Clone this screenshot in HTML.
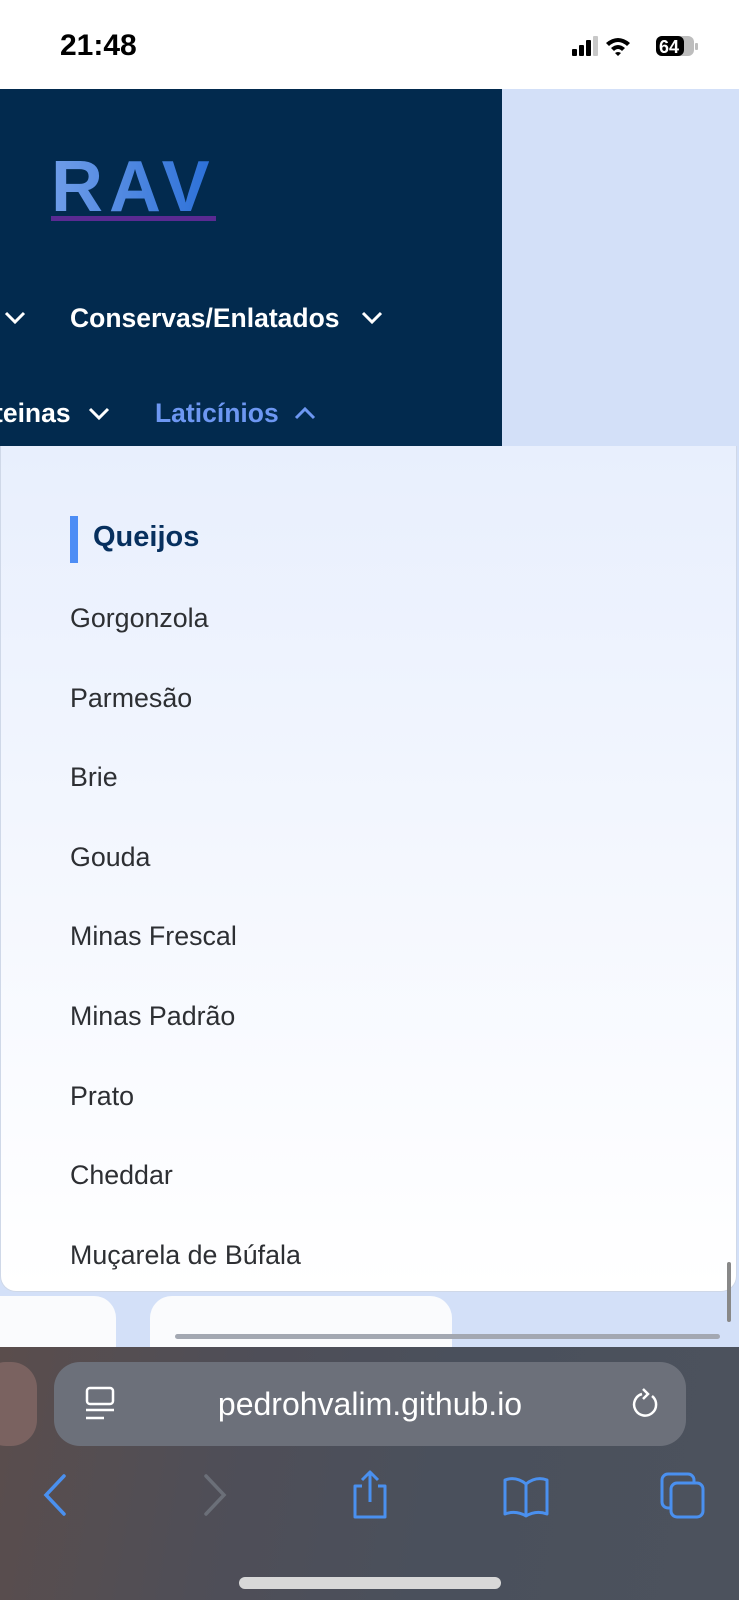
<!DOCTYPE html>
<html><head><meta charset="utf-8"><style>
*{margin:0;padding:0;box-sizing:border-box}
body{width:739px;height:1600px;overflow:hidden;position:relative;background:#d3e0f8;font-family:"Liberation Sans",sans-serif}
.abs{position:absolute}
.status{left:0;top:0;width:739px;height:89px;background:#fff}
.time{left:60px;top:29px;font-size:30px;font-weight:bold;color:#000}
.dark{left:0;top:89px;width:502px;height:357px;background:#022a4e}
.rav{left:51px;top:146px;font-size:72px;font-weight:bold;letter-spacing:6px;background:linear-gradient(90deg,#6f9de8,#2a6fd8);-webkit-background-clip:text;color:transparent}
.ul{left:51px;top:216px;width:165px;height:5px;background:#5a2a92}
.nav{font-size:26.5px;font-weight:bold;color:#fff}
.panel{left:0;top:446px;width:737px;height:846px;background:linear-gradient(#e8effd,#fbfcff 80%,#fff);border:1px solid #cfd8e8;border-top:none;border-radius:0 0 16px 16px}
.bar{left:70px;top:516px;width:8px;height:47px;background:#4d8df5}
.q{left:93px;top:521px;font-size:29px;font-weight:bold;color:#07305e}
.it{left:70px;font-size:26.8px;color:#2d2f33}
.card{background:#fafbfd;border-radius:22px}
.tool{left:0;top:1347px;width:739px;height:253px;background:linear-gradient(100deg,#5a4d4c 0%,#4f4e57 30%,#4a505c 60%,#4c525d 100%)}
.url{left:54px;top:1362px;width:632px;height:84px;border-radius:26px;background:#6c707a}
.ut{left:0;width:632px;top:24px;text-align:center;font-size:32px;color:#fff}
</style></head><body>
<div class="abs status"></div>
<div class="abs time">21:48</div>
<svg class="abs" style="left:570px;top:34px" width="135" height="26" viewBox="0 0 135 26">
<rect x="2" y="15" width="5" height="7" rx="1" fill="#000"/><rect x="9" y="11" width="5" height="11" rx="1" fill="#000"/><rect x="16" y="6" width="5" height="16" rx="1" fill="#000"/><rect x="23" y="2" width="5" height="20" rx="1" fill="#c8c8c8"/>
<path d="M36 9 Q48 -1 60 9 L57 12 Q48 4 39 12Z M41 14 Q48 8 55 14 L52 17 Q48 13 44 17Z M45 19 L48 22 L51 19 Q48 17 45 19Z" fill="#000"/>
<rect x="86" y="2" width="38" height="20" rx="6" fill="#bdbdbd"/><rect x="86" y="2" width="28" height="20" rx="6" fill="#000"/><rect x="125" y="9" width="3" height="7" rx="1" fill="#bdbdbd"/>
<text x="89" y="19" font-size="18" font-weight="bold" fill="#fff" font-family="Liberation Sans">64</text></svg>
<div class="abs dark"></div>
<div class="abs rav">RAV</div>
<div class="abs ul"></div>
<svg class="abs" style="left:4px;top:311px" width="22" height="14"><path d="M2 2 L11 11 L20 2" stroke="#fff" stroke-width="3" fill="none"/></svg>
<div class="abs nav" style="left:70px;top:303px">Conservas/Enlatados</div>
<svg class="abs" style="left:361px;top:311px" width="22" height="14"><path d="M2 2 L11 11 L20 2" stroke="#fff" stroke-width="3" fill="none"/></svg>
<div class="abs nav" style="left:-6px;top:398px">teinas</div>
<svg class="abs" style="left:88px;top:407px" width="22" height="14"><path d="M2 2 L11 11 L20 2" stroke="#fff" stroke-width="3" fill="none"/></svg>
<div class="abs nav" style="left:155px;top:398px;color:#6d97f2">Laticínios</div>
<svg class="abs" style="left:294px;top:406px" width="22" height="14"><path d="M2 12 L11 3 L20 12" stroke="#6d97f2" stroke-width="3" fill="none"/></svg>
<div class="abs card" style="left:-30px;top:1296px;width:146px;height:80px"></div>
<div class="abs card" style="left:150px;top:1296px;width:302px;height:80px"></div>
<div class="abs" style="left:175px;top:1334px;width:545px;height:5px;border-radius:3px;background:#a3a8b2"></div>
<div class="abs panel"></div>
<div class="abs" style="left:727px;top:1262px;width:4px;height:60px;border-radius:2px;background:#888"></div>
<div class="abs bar"></div>
<div class="abs q">Queijos</div>
<div class="abs it" style="top:603px">Gorgonzola</div>
<div class="abs it" style="top:683px">Parmesão</div>
<div class="abs it" style="top:762px">Brie</div>
<div class="abs it" style="top:842px">Gouda</div>
<div class="abs it" style="top:921px">Minas Frescal</div>
<div class="abs it" style="top:1001px">Minas Padrão</div>
<div class="abs it" style="top:1081px">Prato</div>
<div class="abs it" style="top:1160px">Cheddar</div>
<div class="abs it" style="top:1240px">Muçarela de Búfala</div>
<div class="abs tool"></div>
<div class="abs" style="left:-20px;top:1362px;width:57px;height:84px;border-radius:26px;background:#7a6260"></div>
<div class="abs url"><div class="abs ut">pedrohvalim.github.io</div>
<svg class="abs" style="left:30px;top:24px" width="32" height="36"><rect x="3" y="2" width="26" height="16" rx="3" stroke="#fff" stroke-width="2.5" fill="none"/><path d="M2 24 H30 M2 32 H20" stroke="#fff" stroke-width="2.5"/></svg>
<svg class="abs" style="left:576px;top:24px" width="34" height="38"><path d="M22 10 A11 11 0 1 1 12 8" stroke="#fff" stroke-width="2.5" fill="none"/><path d="M13 3 L18 8 L13 13" stroke="#fff" stroke-width="2.5" fill="none"/></svg>
</div>
<svg class="abs" style="left:40px;top:1473px" width="30" height="44"><path d="M24 3 L6 22 L24 41" stroke="#4a90ef" stroke-width="3.5" fill="none" stroke-linecap="round"/></svg>
<svg class="abs" style="left:200px;top:1473px" width="30" height="44"><path d="M6 3 L24 22 L6 41" stroke="#6b6f78" stroke-width="3.5" fill="none" stroke-linecap="round"/></svg>
<svg class="abs" style="left:350px;top:1470px" width="40" height="50"><path d="M12 16 H5 V47 H35 V16 H28 M20 3 V32 M12 10 L20 2 L28 10" stroke="#4a90ef" stroke-width="3" fill="none" stroke-linejoin="round"/></svg>
<svg class="abs" style="left:502px;top:1476px" width="48" height="42"><path d="M24 8 Q14 0 3 4 V38 Q14 34 24 40 Q34 34 45 38 V4 Q34 0 24 8 V40" stroke="#4a90ef" stroke-width="3" fill="none" stroke-linejoin="round"/></svg>
<svg class="abs" style="left:660px;top:1472px" width="46" height="48"><rect x="2" y="2" width="32" height="34" rx="6" stroke="#4a90ef" stroke-width="3" fill="none"/><rect x="11" y="11" width="32" height="34" rx="6" stroke="#4a90ef" stroke-width="3" fill="#4c525d"/></svg>
<div class="abs" style="left:239px;top:1577px;width:262px;height:12px;border-radius:6px;background:#d8d8d8"></div>
</body></html>
